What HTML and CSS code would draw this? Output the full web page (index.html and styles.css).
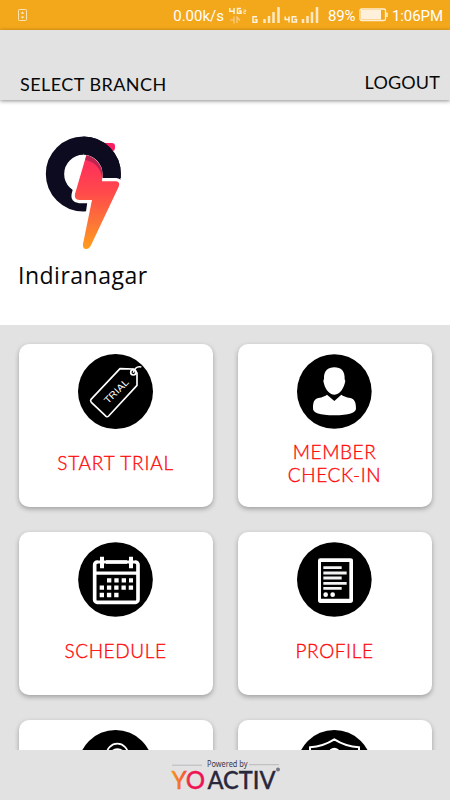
FILE: index.html
```html
<!DOCTYPE html>
<html lang="en">
<head>
<meta charset="utf-8">
<meta name="viewport" content="width=device-width">
<title>YoActiv</title>
<link rel="stylesheet" href="styles.css">
</head>
<body>
<div class="app">
  <div class="status">
    <svg class="usb" width="10" height="13" viewBox="0 0 10 13"><rect x=".5" y=".5" width="8" height="11" rx=".8" fill="none" stroke="#fde3b4"/><path d="M4.500 2.500l1.700 2.300H2.800zM4.500 9.800l1.700-2.300H2.800z" fill="#fff0d4"/></svg>
    <span class="speed">0.00k/s</span>
    <svg class="signals" width="92" height="20" viewBox="0 0 92 20" fill="none" stroke="#fff3dc" stroke-width="1.5">
      <path d="M.8 2v3.200h5M5 2v6M12 2.600H8.500v4.600H12V5h-2"/>
      <path d="M14.500 4h2.200v1.700h-2v1.700h2.200" stroke-width=".8"/>
      <path d="M1 14h4V10.500M5 10.500v7M8 17v-6l3 3.500" stroke="#f8cf89" stroke-width="1.200"/>
      <path d="M28 10.700h-4v5.500h3.800v-2.500h-2"/>
      <path d="M56.200 10.500v3h4.500M60 10.500v6M67.500 10.800h-4.300v5.200h4.300v-2.400h-2.200"/>
      <path d="M35.500 17v-4M40 17v-7M44.500 17V6M49.500 17V1M74 17v-4M78.500 17v-7M83 17V6M88 17V1" stroke-width="2.500" stroke="#ffe9c4"/>
    </svg>
    <span class="percent">89%</span>
    <svg class="battery" width="30" height="14" viewBox="0 0 30 14"><rect x="1" y="1" width="25.500" height="11.500" rx="1.500" fill="none" stroke="#fff0d5" stroke-width="1.300"/><path d="M2 2h20v9.500H2z" fill="#fff0dc"/><path d="M28 4.500v4.500" stroke="#fff0d5" stroke-width="1.500"/></svg>
    <span class="time">1:06PM</span>
  </div>
  <header class="header">
    <span class="title">SELECT BRANCH</span>
    <span class="logout">LOGOUT</span>
  </header>
  <section class="branch">
    <svg class="branch-logo" width="160" height="140" viewBox="0 0 480 420">
      <defs>
        <linearGradient id="bolt" x1="0" y1="105" x2="0" y2="387" gradientUnits="userSpaceOnUse"><stop offset="0" stop-color="#ff285f"/><stop offset=".4" stop-color="#ff4a4b"/><stop offset=".75" stop-color="#fd7935"/><stop offset="1" stop-color="#ff9d1b"/></linearGradient>
      </defs>
      <rect x="275" y="69" width="40" height="24" rx="10" fill="#f91d62"/>
      <circle cx="220" cy="162" r="85" fill="none" stroke="#0c0b20" stroke-width="55"/>
      <path d="M229 106L195 222Q191 239 208 240H243L229 340L326 200Q332 186 318 184H276V106Z" fill="#fff" stroke="#fff" stroke-width="20" stroke-linejoin="round"/>
      <path d="M220 77A85 85 0 0 1 305 162V174" fill="none" stroke="#0c0b20" stroke-width="55"/>
      <path d="M229 106L195 222Q191 239 208 240H246L219 372Q217 387 229 387Q238 387 243 376L326 200Q332 186 318 184H276C282 145 263 114 229 106Z" fill="url(#bolt)"/>
      <path d="M229 106C263 114 282 145 277 172C269 140 255 128 226 119Z" fill="#bd2450"/>
    </svg>
    <div class="branch-name">Indiranagar</div>
  </section>
  <main class="grid">
    <div class="card">
      <svg class="icon" viewBox="204 56 225 225">
        <circle cx="316.500" cy="168.500" r="112.500"/>
        <path d="M243 192L330 100L371 101L381 113L381 150L296 242Q291 247 286 241L244 201Q240 196 243 192Z" fill="none" stroke="#fff" stroke-width="5" stroke-linejoin="round"/>
        <circle cx="370" cy="111" r="8" fill="#000" stroke="#fff" stroke-width="5"/>
        <path d="M370 112C374 98 382 92 394 95" fill="none" stroke="#fff" stroke-width="5"/>
        <text class="tag-text" x="0" y="0" textLength="91" lengthAdjust="spacingAndGlyphs" transform="translate(294 207) rotate(-45)">TRIAL</text>
      </svg>
      <div class="label trial">START TRIAL</div>
    </div>
    <div class="card">
      <svg class="icon" viewBox="201 56 225 225">
        <circle cx="313" cy="168.500" r="112"/>
        <path d="M313 96C333 96 345 106 344 132Q348 136 344 145C338 167 324 178 313 178C301 178 287 165 282 145Q278 136 282 130C281 106 294 96 313 96ZM291 178L313 197L334 178Q341 184 361 188C374 191 378 202 378 219Q379 240 313 240Q247 240 249 218C249 202 252 191 265 188Q284 184 291 178Z" fill="#fff"/>
      </svg>
      <div class="label">MEMBER<br>CHECK-IN</div>
    </div>
    <div class="card">
      <svg class="icon" viewBox="204 50 225 225">
        <circle cx="316.500" cy="162.500" r="112"/>
        <rect x="254" y="110" width="130" height="121" rx="8" fill="none" stroke="#fff" stroke-width="11"/>
        <path d="M254 143.500H384" stroke="#fff" stroke-width="10"/>
        <path d="M276 94V129M363 94V129" stroke="#000" stroke-width="24"/>
        <path d="M276 94V129M363 94V129" stroke="#fff" stroke-width="12"/>
        <path d="M264 110H376" stroke="#fff" stroke-width="9"/>
        <path d="M291 165H369" stroke="#fff" stroke-width="13" stroke-dasharray="13 9"/>
        <path d="M269 187H370M269 209H327" stroke="#fff" stroke-width="13" stroke-dasharray="13 8.800"/>
      </svg>
      <div class="label">SCHEDULE</div>
    </div>
    <div class="card">
      <svg class="icon" viewBox="201 50 225 225">
        <circle cx="313" cy="162.500" r="112"/>
        <path d="M264 106Q264 99 271 99H361Q369 99 369 106V225Q369 233 361 233H271Q264 233 264 225ZM273 110V220H358V110Z" fill="#fff" fill-rule="evenodd"/>
        <path d="M280 127H335M280 143H350M280 158H335M280 174H350M280 189H335" stroke="#f3f3f6" stroke-width="8.500"/>
        <circle cx="287" cy="208" r="7" fill="#fff"/><circle cx="308" cy="208" r="7" fill="#fff"/>
      </svg>
      <div class="label">PROFILE</div>
    </div>
    <div class="card">
      <svg class="icon" viewBox="235 90 225 225">
        <circle cx="347.500" cy="202.500" r="112.500"/>
        <circle cx="353" cy="163" r="32" fill="none" stroke="#fff" stroke-width="5"/>
        <path d="M334 154Q340 145 353 145T373 154Z" fill="#fff"/>
      </svg>
    </div>
    <div class="card">
      <svg class="icon" viewBox="216 90 225 225">
        <circle cx="328" cy="202.500" r="112.500"/>
        <path d="M255 190V142Q295 139 328 118Q361 139 402 142V190" fill="none" stroke="#fff" stroke-width="6"/>
        <circle cx="328" cy="160" r="17" fill="#fff"/>
      </svg>
    </div>
  </main>
  <footer class="footer">
    <svg width="130" height="50" viewBox="0 0 130 50">
      <defs><linearGradient id="yo" x1="12" y1="0" x2="45" y2="0" gradientUnits="userSpaceOnUse"><stop offset="0" stop-color="#f7941d"/><stop offset=".42" stop-color="#f5513c"/><stop offset=".55" stop-color="#ee1550"/><stop offset="1" stop-color="#ed1252"/></linearGradient></defs>
      <path d="M12 15.200H42M89 14.700H119" stroke="#b9b9bd"/>
      <text class="powered" x="47" y="17" textLength="40.500" lengthAdjust="spacingAndGlyphs">Powered by</text>
      <text class="brand" x="11.500" y="38.700" textLength="33.500" lengthAdjust="spacingAndGlyphs" fill="url(#yo)" stroke="url(#yo)">YO</text>
      <text class="brand" x="47.500" y="38.700" textLength="68" lengthAdjust="spacingAndGlyphs" fill="#29273c" stroke="#29273c">ACTIV</text>
      <circle cx="118" cy="19.500" r="2" fill="#777582"/>
    </svg>
  </footer>
</div>
</body>
</html>
```
FILE: styles.css
```css
* { box-sizing: border-box; }
body { margin: 0; font-family: Lato, "Open Sans", sans-serif; background: #e2e2e2; }
svg { display: block; flex: none; }
.app { width: 450px; height: 800px; display: flex; flex-direction: column; overflow: hidden; }
.status { flex: none; height: 30px; padding: 2px 8px 0 0; display: flex; align-items: center; background: #f3a71b; color: #fff; font: 15px/21px Roboto, sans-serif; }
.usb { margin: -2px 0 0 18px; }
.speed { margin-left: auto; }
.signals { margin: -1px 0 0 5px; }
.percent { width: 27px; margin-left: 7px; letter-spacing: -.2px; }
.battery { margin: -3px 0 0 4px; }
.time { width: 50px; margin-left: 3px; white-space: nowrap; letter-spacing: -.1px; }
.header { flex: none; height: 70px; padding: 0 10px 4px 20px; display: flex; justify-content: space-between; align-items: flex-end; background: #e2e2e2; color: #080808; font-size: 18px; line-height: 24px; box-shadow: 0 1px 4px rgba(0, 0, 0, .45); z-index: 1; }
.title { letter-spacing: .45px; }
.logout { padding-bottom: 2px; letter-spacing: .15px; }
.branch { flex: none; height: 225px; padding: 20px 10px 0; background: #fff; }
.branch-name { margin: 0 0 0 8px; font-family: "Open Sans", sans-serif; font-size: 23px; line-height: 30px; letter-spacing: .5px; color: #080808; }
.grid { flex: 1; min-height: 0; padding: 19px 18px 0 18.500px; display: grid; grid-template-columns: 194px 194px; grid-auto-rows: 163px; gap: 25px; overflow: hidden; background: #e2e2e2; }
.card { display: flex; flex-direction: column; align-items: center; padding-top: 9.500px; background: #fff; border-radius: 10px; box-shadow: 0 2px 5px rgba(0, 0, 0, .3); }
.icon { width: 75px; height: 75px; margin-right: 1px; }
.label { height: 68px; display: flex; align-items: center; text-align: center; font-size: 19px; font-weight: 300; line-height: 23px; letter-spacing: .6px; color: #ff0808; -webkit-text-stroke: .35px #ff0808; }
.trial { letter-spacing: .8px; }
.tag-text { font: 29px "Liberation Sans", sans-serif; fill: #fff; }
.footer { flex: none; height: 50px; padding-left: 160px; background: #e2e2e2; z-index: 1; }
.powered { font: 8.500px "Noto Sans", sans-serif; fill: #3b394b; }
.brand { font: 500 25px Lato, sans-serif; stroke-width: .35px; }
```
